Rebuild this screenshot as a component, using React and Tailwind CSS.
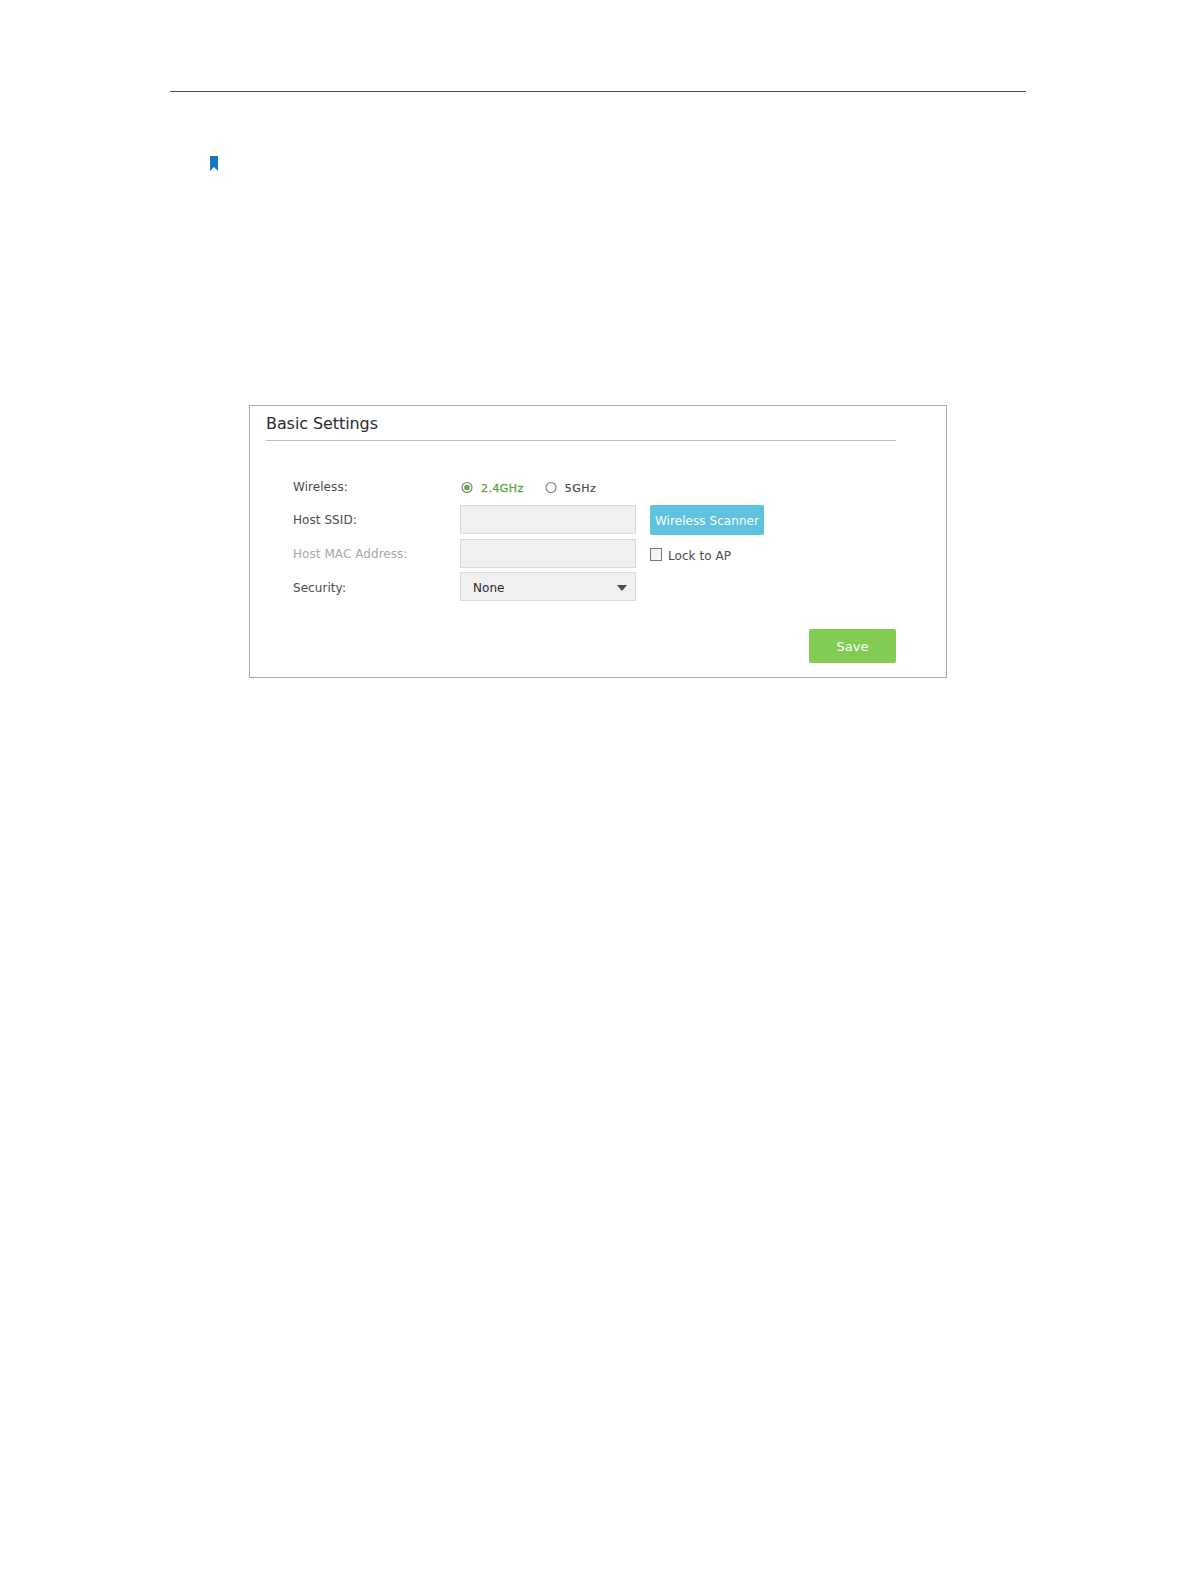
import React, { useState } from 'react';

function Radio({ checked, onClick, children }) {
  return (
    <button type="button" onClick={onClick} className="mt-[3px] flex items-start">
      <svg width="12" height="12" viewBox="0 0 12 12" className="mr-[8px]">
        <circle cx="6" cy="6.5" r="5" fill="#fbfbfb" stroke="#77787a" strokeWidth="1.1" />
        {checked && <circle cx="6" cy="6.5" r="2.8" fill="#62ab45" />}
      </svg>
      <span
        className={
          checked
            ? 'mt-px text-[11px] leading-[14px] tracking-[0.45px] text-[#5fa53a] [-webkit-text-stroke:0.3px]'
            : 'mt-px text-[11px] leading-[14px] tracking-[0.45px] text-[#4b4b4d] [-webkit-text-stroke:0.2px]'
        }
      >
        {children}
      </span>
    </button>
  );
}

export default function App() {
  const [band, setBand] = useState('2.4');
  const [locked, setLocked] = useState(false);

  return (
    <div className="min-h-[1582px] w-[1196px] bg-white pt-[91px] font-['DejaVu_Sans',sans-serif] text-[12px] leading-[14px] tracking-[0.06px] text-[#4b4b4d]">
      <div className="ml-[170px] h-px w-[856px] bg-[#4a4a4c]" />

      {/* Note marker */}
      <svg width="8" height="15" viewBox="0 0 8 15" className="mt-[64px] ml-[210px] block">
        <path d="M0 0h8v15L4 11 0 15z" fill="#1878be" />
      </svg>

      <div className="mt-[234px] ml-[249px] h-[273px] w-[698px] border border-[#a8a8a9] pr-[50px] pl-[16px]">
        <h1 className="mt-[8px] h-[27px] border-b border-[#bdbdbd] text-[16px] leading-[19px] tracking-[-0.08px] text-[#2b2b2d]">
          Basic Settings
        </h1>

        {/* Wireless band */}
        <div className="mt-[37px] ml-[27px] flex h-[18px] items-start">
          <span className="mt-[2px] w-[168px]">Wireless:</span>
          <Radio checked={band === '2.4'} onClick={() => setBand('2.4')}>2.4GHz</Radio>
          <div className="w-[21px]" />
          <Radio checked={band === '5'} onClick={() => setBand('5')}>5GHz</Radio>
        </div>

        <div className="mt-[9px] ml-[27px] flex h-[30px] items-start">
          <span className="mt-[8px] w-[167px]">Host SSID:</span>
          <input className="h-[29px] w-[176px] border border-[#dadadb] bg-[#f1f0f1] px-3 outline-none" />
          <button type="button" className="ml-[14px] h-[30px] w-[114px] rounded-[2px] bg-[#5fc2df] pt-px text-white">
            Wireless Scanner
          </button>
        </div>

        <div className="mt-[4px] ml-[27px] flex h-[29px] items-start">
          <span className="mt-[8px] w-[167px] text-[#a7a7a8]">Host MAC Address:</span>
          <input className="h-[29px] w-[176px] border border-[#dadadb] bg-[#f1f0f1] px-3 outline-none" />
          <button type="button" onClick={() => setLocked(!locked)} className="mt-[9px] ml-[14px] flex items-start">
            <span className="flex h-[13px] w-[12px] items-center justify-center border border-[#77787a] bg-gradient-to-br from-[#eeeeee] to-[#fafafa]">
              {locked && <span className="size-[6px] bg-[#62ab45]" />}
            </span>
            <span className="mt-px ml-[6px]">Lock to AP</span>
          </button>
        </div>

        <div className="mt-[4px] ml-[27px] flex h-[29px] items-start">
          <span className="mt-[9px] w-[167px]">Security:</span>
          <button
            type="button"
            className="flex h-[29px] w-[176px] items-start justify-between border border-[#dadadb] bg-[#f1f0f1] pt-[8px] pr-[8px] pl-[12px] text-[#2b2b2d]"
          >
            None
            <svg width="10" height="6" viewBox="0 0 10 6" className="mt-[4px]">
              <path d="M0 0h10L5 6z" fill="#4a4a4c" />
            </svg>
          </button>
        </div>

        <div className="mt-[28px] flex justify-end">
          <button type="button" className="h-[34px] w-[87px] rounded-[2px] bg-[#82cc54] pt-px text-[13px] leading-[15px] text-white">
            Save
          </button>
        </div>
      </div>
    </div>
  );
}
